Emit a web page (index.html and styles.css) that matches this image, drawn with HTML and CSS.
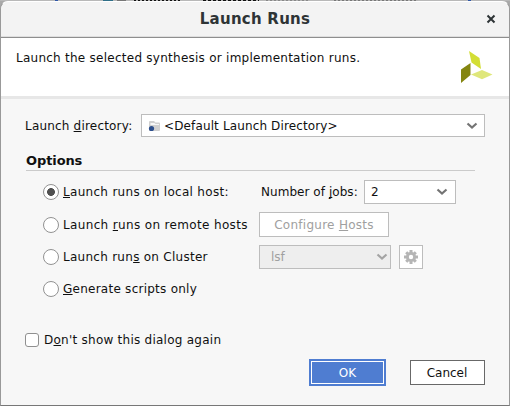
FILE: index.html
```html
<!DOCTYPE html>
<html lang="en">
<head>
<meta charset="utf-8">
<title>Launch Runs</title>
<link rel="stylesheet" href="styles.css">
</head>
<body>
<div class="backdrop"></div>
<main class="dialog">
  <header class="titlebar">
    <h1 class="title">Launch Runs</h1>
    <svg class="close" width="10" height="10" viewBox="0 0 10 10"><path d="M1.500 1.500l7 7M8.500 1.500l-7 7"/></svg>
  </header>
  <section class="intro">
    <p class="t intro-text">Launch the selected synthesis or implementation runs.</p>
    <svg class="logo" width="34" height="34" viewBox="0 0 34 34">
      <path fill="#d3de35" d="M9 1l10.500 7L21 19l-9.500-6.500z"/>
      <path fill="#848510" d="M1 19.500l9.500-6.500V25L1 33z"/>
      <path fill="#dfe77b" d="M11 24.500l11-4.500 10.500 4.500-10.500 4.800z"/>
    </svg>
  </section>
  <section class="content">
    <div class="directory">
      <span class="t dir-label">Launch <u>d</u>irectory:</span>
      <div class="box select dir-select">
        <svg class="folder" width="13" height="12" viewBox="0 0 13 12">
          <path fill="#d0d0d0" d="M1 2q0-1 1-1h4l1.500 1.500H11q1 0 1 1V10q0 1-1 1H1z"/>
          <path fill="#f7f7f7" d="M2.500 3h4l1 1H11v1H2.500z"/>
          <circle cx="3.500" cy="8.500" r="2.600" fill="#2c4e8c"/>
        </svg>
        <span class="t dir-value">&lt;Default Launch Directory&gt;</span>
        <svg class="chevron" width="12" height="8" viewBox="0 0 12 8"><path d="M1.500 1.500L6 5.500l4.500-4"/></svg>
      </div>
    </div>
    <h2 class="heading"><span class="heading-text">Options</span></h2>
    <div class="options">
      <div class="row">
        <i class="radio on"></i><span class="t label local"><u>L</u>aunch runs on local host:</span>
        <span class="t jobs-label">Number of <u>j</u>obs:</span>
        <div class="box select jobs"><span class="t">2</span><svg class="chevron" width="12" height="8" viewBox="0 0 12 8"><path d="M1.500 1.500L6 5.500l4.500-4"/></svg></div>
      </div>
      <div class="row tall">
        <i class="radio"></i><span class="t label remote">Launch <u>r</u>uns on remote hosts</span>
        <div class="box hosts"><span class="t hosts-text">Configure <u>H</u>osts</span></div>
      </div>
      <div class="row">
        <i class="radio"></i><span class="t label cluster">Launch run<u>s</u> on Cluster</span>
        <div class="box select lsf"><span class="t">lsf</span><svg class="chevron" width="12" height="8" viewBox="0 0 12 8"><path d="M1.500 1.500L6 5.500l4.500-4"/></svg></div>
        <div class="box gear">
          <svg width="14" height="14" viewBox="0 0 14 14">
            <g stroke="#b5b5b5" stroke-width="3"><path d="M7 0v14M0 7h14M2.200 2.200l9.600 9.600M11.800 2.200l-9.600 9.600"/></g>
            <circle cx="7" cy="7" r="5" fill="#b5b5b5"/><circle cx="7" cy="7" r="2.200" fill="#fff"/>
          </svg>
        </div>
      </div>
      <div class="row">
        <i class="radio"></i><span class="t label scripts"><u>G</u>enerate scripts only</span>
      </div>
    </div>
    <div class="again"><i class="check"></i><span class="t again-text">D<u>o</u>n't show this dialog again</span></div>
    <footer class="actions">
      <div class="ok"><span class="t">OK</span></div>
      <div class="cancel"><span class="t">Cancel</span></div>
    </footer>
  </section>
</main>
</body>
</html>
```
FILE: styles.css
```css
* { box-sizing: border-box; }
body {
  margin: 0;
  background: #a9a9a9;
  font: 12px/16px "DejaVu Sans", sans-serif;
  color: #101010;
}
/* sliver of the window behind the dialog */
.backdrop {
  height: 1px;
  background:
    linear-gradient(#2f57a8, #2f57a8) 55px 0 / 3px 1px no-repeat,
    linear-gradient(#2f57a8, #2f57a8) 468px 0 / 3px 1px no-repeat,
    linear-gradient(#2f6f88, #2f6f88) 103px 0 / 10px 1px no-repeat,
    linear-gradient(#777, #777) 117px 0 / 9px 1px no-repeat,
    repeating-linear-gradient(90deg, #111 0 2px, #b4b4b4 2px 4px) 134px 0 / 46px 1px no-repeat,
    repeating-linear-gradient(90deg, #111 0 3px, #b4b4b4 3px 5px) 203px 0 / 56px 1px no-repeat,
    repeating-linear-gradient(90deg, #888 0 2px, #b4b4b4 2px 4px) 266px 0 / 44px 1px no-repeat,
    repeating-linear-gradient(90deg, #777 0 2px, #b4b4b4 2px 4px) 334px 0 / 84px 1px no-repeat,
    #b8b8b8;
}
.dialog {
  width: 510px;
  height: 405px;
  border: 1px solid #999;
  border-bottom-color: #777;
  border-top-color: #fff;
  border-radius: 8px 8px 0 0;
  background: #f7f7f7;
  overflow: hidden;
}
.titlebar {
  height: 36px;
  background: #f3f3f3;
  border-bottom: 1px solid #8e8e8e;
  box-shadow: inset 0 -1px #dedede;
  display: grid;
  grid-template-columns: 1fr auto;
  align-items: center;
  padding: 0 13px 1px 23px;
}
.title {
  margin: 0;
  font-size: 15px;
  line-height: 20px;
  letter-spacing: 0.25px;
  text-align: center;
  color: #2e3436;
}
.close { fill: none; stroke: #2e3436; stroke-width: 2; }
.intro {
  height: 61px;
  background: #fff;
  border-bottom: 3px solid #e7e7e7;
  display: flex;
  justify-content: space-between;
  padding: 12px 15px 0 15px;
}
.intro p { margin: 0; }
.intro-text { letter-spacing: 0.255px; }
.t { white-space: nowrap; display: block; }
u { text-decoration: underline; text-decoration-skip-ink: none; text-decoration-thickness: 1px; text-underline-offset: 1px; }
.content { padding: 15px 24px 0; }
.box { border: 1px solid #bdbdbd; background: #fff; display: flex; align-items: center; }
.select { justify-content: space-between; padding-right: 6px; }
.chevron { fill: none; stroke: #747474; stroke-width: 2.2; }
.directory { display: flex; align-items: center; }
.dir-label { width: 116px; letter-spacing: 0.19px; }
.dir-select { width: 344px; height: 23px; padding-left: 6px; }
.dir-value { flex: 1; margin-left: 3px; letter-spacing: 0.13px; }
.heading {
  margin: 15px 10px 9px 1px;
  height: 19px;
  border-bottom: 1px solid #cbcbcb;
  font-size: 13px;
  line-height: 18px;
  letter-spacing: -0.1px;
}
.options { display: grid; gap: 8px; }
.row { display: flex; align-items: center; height: 24px; padding-left: 18px; }
.tall { height: 25px; }
.radio {
  width: 16px;
  height: 16px;
  border: 1px solid #929292;
  border-radius: 50%;
  background: #fff;
}
.on { background: radial-gradient(circle, #505050 0 3.600px, #fff 4.200px); }
.label { width: 200px; padding-left: 4px; }
.local { letter-spacing: 0.3px; }
.remote { letter-spacing: 0.35px; }
.cluster { letter-spacing: 0.27px; }
.scripts { letter-spacing: 0.25px; }
.jobs-label { width: 105px; padding-left: 2px; letter-spacing: 0.05px; }
.jobs { width: 92px; height: 24px; padding: 0 7px 0 6px; }
.hosts { width: 130px; height: 25px; justify-content: center; color: #a0a0a0; }
.hosts-text { letter-spacing: 0.27px; }
.lsf { width: 132px; height: 24px; background: #eee; color: #a0a0a0; padding: 0 2px 0 11px; }
.lsf .chevron { stroke: #a4a4a4; }
.gear { width: 24px; height: 24px; margin-left: 8px; justify-content: center; }
.again { display: flex; align-items: center; margin-top: 31px; height: 16px; }
.check { width: 14px; height: 14px; border: 1px solid #909090; border-radius: 3px; background: #fff; }
.again-text { margin-left: 5px; letter-spacing: 0.25px; }
.actions { display: flex; justify-content: flex-end; align-items: center; gap: 24px; margin-top: 11px; }
.ok {
  width: 77px;
  height: 27px;
  background: #4f7dd1;
  border: 2px solid #4f7dd1;
  box-shadow: inset 0 0 0 1px #fff;
  color: #fff;
  display: grid;
  place-items: center;
}
.cancel { width: 75px; height: 25px; border: 1px solid #686868; background: #fff; display: grid; place-items: center; padding-right: 1px; }
```
